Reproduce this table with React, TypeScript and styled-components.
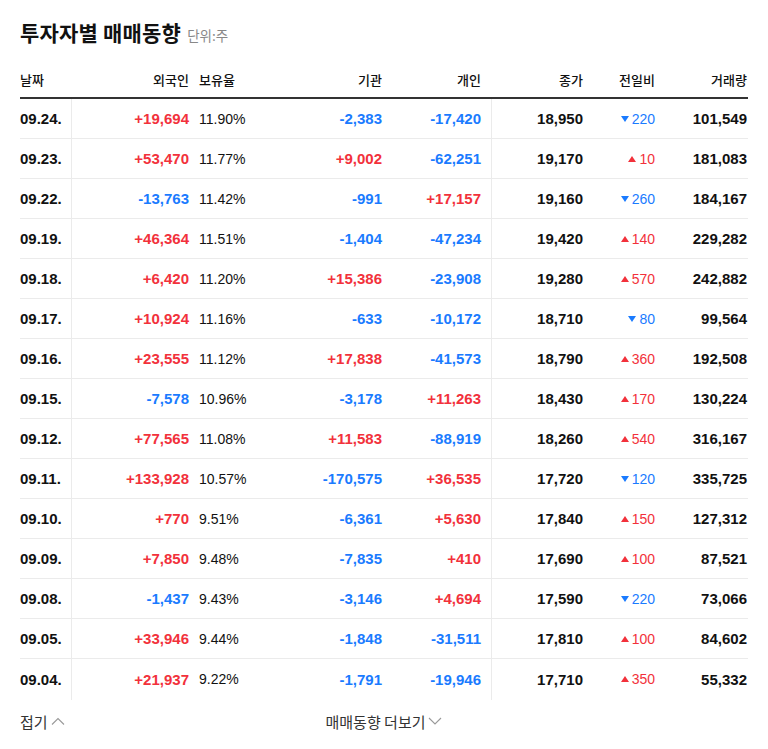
import React from "react";
import styled, { createGlobalStyle } from "styled-components";

const GlobalStyle = createGlobalStyle`
  html, body { margin: 0; padding: 0; background: #fff; }
  body { font-family: "Liberation Sans", "Noto Sans CJK KR", sans-serif; color: #111; }
`;

const RED = "#f2313b";
const BLUE = "#1a7bff";

const Page = styled.div`
  width: 768px;
  padding: 20px 20px 0;
  box-sizing: border-box;
`;

const TitleRow = styled.div`
  display: flex;
  align-items: baseline;
  gap: 6px;
  height: 24px;
  margin-bottom: 19px;
`;

const Title = styled.h2`
  margin: 0;
  font-family: "Noto Sans CJK KR", sans-serif;
  font-size: 21px;
  line-height: 24px;
  font-weight: 700;
  color: #111;
  letter-spacing: 0.2px;
`;

const Unit = styled.span`
  font-family: "Noto Sans CJK KR", sans-serif;
  font-size: 13.5px;
  color: #888;
`;

const COLS = "52px 127px 101px 92px 100px 101px 72px 83px";

const HeadRow = styled.div`
  display: grid;
  grid-template-columns: ${COLS};
  height: 36px;
  box-sizing: border-box;
  border-bottom: 2px solid #333;
  align-items: center;
`;

const HeadCell = styled.div<{ $align: "left" | "right"; $pr?: number; $pl?: number }>`
  font-family: "Noto Sans CJK KR", sans-serif;
  font-size: 13px;
  font-weight: 500;
  color: #111;
  text-align: ${(p) => p.$align};
  padding-right: ${(p) => p.$pr ?? 0}px;
  padding-left: ${(p) => p.$pl ?? 0}px;
  margin-top: -2px;
`;

const Row = styled.div<{ $last?: boolean }>`
  display: grid;
  grid-template-columns: ${COLS};
  height: 40px;
  box-sizing: border-box;
  border-bottom: ${(p) => (p.$last ? "none" : "1px solid #ebebeb")};
`;

const Cell = styled.div<{
  $align: "left" | "right";
  $pr?: number;
  $pl?: number;
  $divider?: boolean;
  $color?: string;
  $bold?: boolean;
  $size?: number;
}>`
  display: flex;
  align-items: center;
  justify-content: ${(p) => (p.$align === "left" ? "flex-start" : "flex-end")};
  padding-right: ${(p) => p.$pr ?? 0}px;
  padding-left: ${(p) => p.$pl ?? 0}px;
  padding-bottom: 1px;
  border-right: ${(p) => (p.$divider ? "1px solid #ebebeb" : "none")};
  margin-bottom: -1px;
  color: ${(p) => p.$color ?? "#111"};
  font-weight: ${(p) => (p.$bold ? 700 : 400)};
  font-size: ${(p) => p.$size ?? 15}px;
  white-space: nowrap;
`;

const Change = styled.span<{ $up: boolean }>`
  display: inline-flex;
  align-items: center;
  gap: 3px;
  color: ${(p) => (p.$up ? RED : BLUE)};
  font-size: 14px;
`;

const Footer = styled.div`
  display: grid;
  grid-template-columns: 1fr auto 1fr;
  align-items: center;
  height: 44px;
`;

const FootLink = styled.a`
  display: inline-flex;
  align-items: center;
  gap: 3px;
  font-family: "Noto Sans CJK KR", sans-serif;
  font-size: 15px;
  color: #333;
  text-decoration: none;
  cursor: pointer;
`;

const Chevron = ({ up }: { up?: boolean }) => (
  <svg width="14" height="8" viewBox="0 0 14 8" aria-hidden>
    <path
      d={up ? "M1 7.5 L7 1.5 L13 7.5" : "M1 1 L7 7 L13 1"}
      fill="none"
      stroke="#999"
      strokeWidth="1.1"
    />
  </svg>
);

const Tri = ({ up }: { up: boolean }) => (
  <svg width="8" height="6" viewBox="0 0 8 6" aria-hidden>
    <path d={up ? "M4 0 L8 6 L0 6 Z" : "M0 0 L8 0 L4 6 Z"} fill={up ? RED : BLUE} />
  </svg>
);

type R = [string, string, string, string, string, string, string, string];

const data: R[] = [
  ["09.24.", "+19,694", "11.90%", "-2,383", "-17,420", "18,950", "-220", "101,549"],
  ["09.23.", "+53,470", "11.77%", "+9,002", "-62,251", "19,170", "+10", "181,083"],
  ["09.22.", "-13,763", "11.42%", "-991", "+17,157", "19,160", "-260", "184,167"],
  ["09.19.", "+46,364", "11.51%", "-1,404", "-47,234", "19,420", "+140", "229,282"],
  ["09.18.", "+6,420", "11.20%", "+15,386", "-23,908", "19,280", "+570", "242,882"],
  ["09.17.", "+10,924", "11.16%", "-633", "-10,172", "18,710", "-80", "99,564"],
  ["09.16.", "+23,555", "11.12%", "+17,838", "-41,573", "18,790", "+360", "192,508"],
  ["09.15.", "-7,578", "10.96%", "-3,178", "+11,263", "18,430", "+170", "130,224"],
  ["09.12.", "+77,565", "11.08%", "+11,583", "-88,919", "18,260", "+540", "316,167"],
  ["09.11.", "+133,928", "10.57%", "-170,575", "+36,535", "17,720", "-120", "335,725"],
  ["09.10.", "+770", "9.51%", "-6,361", "+5,630", "17,840", "+150", "127,312"],
  ["09.09.", "+7,850", "9.48%", "-7,835", "+410", "17,690", "+100", "87,521"],
  ["09.08.", "-1,437", "9.43%", "-3,146", "+4,694", "17,590", "-220", "73,066"],
  ["09.05.", "+33,946", "9.44%", "-1,848", "-31,511", "17,810", "+100", "84,602"],
  ["09.04.", "+21,937", "9.22%", "-1,791", "-19,946", "17,710", "+350", "55,332"],
];

const signColor = (v: string) => (v.startsWith("+") ? RED : BLUE);

export default function App() {
  return (
    <>
      <GlobalStyle />
      <Page>
        <TitleRow>
          <Title>투자자별 매매동향</Title>
          <Unit>단위:주</Unit>
        </TitleRow>
        <HeadRow>
          <HeadCell $align="left">날짜</HeadCell>
          <HeadCell $align="right" $pr={10}>외국인</HeadCell>
          <HeadCell $align="left">보유율</HeadCell>
          <HeadCell $align="right" $pr={10}>기관</HeadCell>
          <HeadCell $align="right" $pr={11}>개인</HeadCell>
          <HeadCell $align="right" $pr={10}>종가</HeadCell>
          <HeadCell $align="right" $pr={10}>전일비</HeadCell>
          <HeadCell $align="right" $pr={1}>거래량</HeadCell>
        </HeadRow>
        {data.map((r, i) => {
          const up = r[6].startsWith("+");
          return (
            <Row key={r[0]} $last={i === data.length - 1}>
              <Cell $align="left" $bold $divider>{r[0]}</Cell>
              <Cell $align="right" $pr={10} $bold $color={signColor(r[1])}>{r[1]}</Cell>
              <Cell $align="left" $size={14}>{r[2]}</Cell>
              <Cell $align="right" $pr={10} $bold $color={signColor(r[3])}>{r[3]}</Cell>
              <Cell $align="right" $pr={10} $bold $divider $color={signColor(r[4])}>{r[4]}</Cell>
              <Cell $align="right" $pr={10} $bold>{r[5]}</Cell>
              <Cell $align="right" $pr={10}>
                <Change $up={up}>
                  <Tri up={up} />
                  {r[6].slice(1)}
                </Change>
              </Cell>
              <Cell $align="right" $pr={1} $bold>{r[7]}</Cell>
            </Row>
          );
        })}
        <Footer>
          <div>
            <FootLink>
              접기
              <Chevron up />
            </FootLink>
          </div>
          <FootLink>
            매매동향 더보기
            <Chevron />
          </FootLink>
          <div />
        </Footer>
      </Page>
    </>
  );
}
